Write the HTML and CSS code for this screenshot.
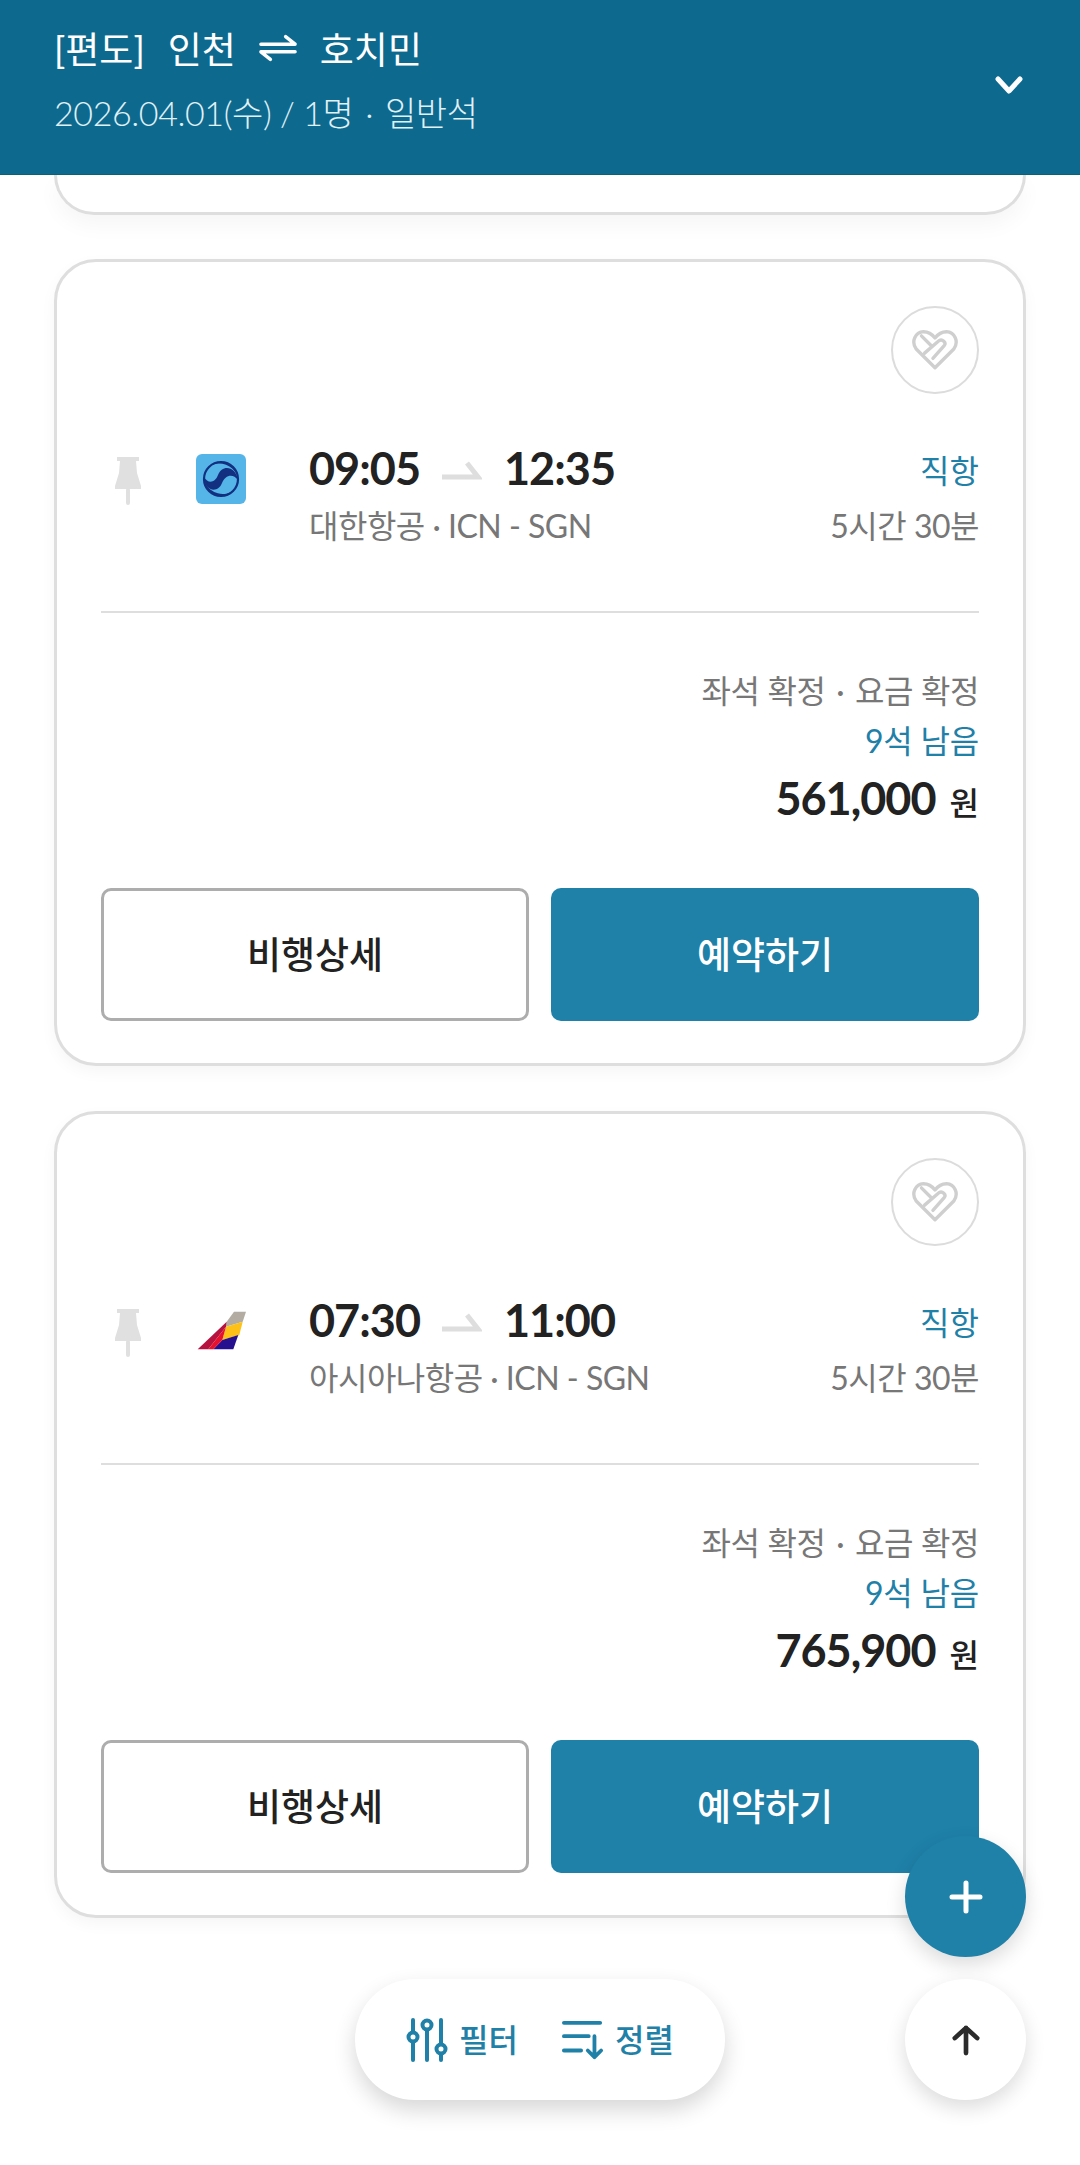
FILE: index.html
```html
<!DOCTYPE html>
<html lang="ko">

<head>
    <meta charset="UTF-8">
    <meta name="viewport" content="width=device-width, initial-scale=1.0">
    <title>항공권 검색 결과</title>
    <link rel="stylesheet" href="styles.css">
</head>

<body>
    <header class="top-bar">
        <div class="top-info">
            <div class="top-title">
                <span>[편도]</span>
                <span>인천</span>
                <svg class="swap-icon" viewBox="0 0 40 30" fill="none" stroke="#fff" stroke-width="3.6" stroke-linecap="round" stroke-linejoin="round">
                    <path d="M2 11h36L28 3"/>
                    <path d="M38 19H2l10 8"/>
                </svg>
                <span>호치민</span>
            </div>
            <div class="top-sub">2026.04.01(수) / 1명 <span class="dot">·</span> 일반석</div>
        </div>
        <svg class="chevron" viewBox="0 0 28 20" fill="none" stroke="#fff" stroke-width="5" stroke-linecap="round" stroke-linejoin="round">
            <path d="M3 4l11 12L25 4"/>
        </svg>
    </header>

    <div class="card-stub"></div>

    <article class="card">
        <div class="card-top">
            <button class="like-btn">
                <svg viewBox="-1 -1 44 40" fill="none" stroke="#cfcfcf" stroke-width="3.2" stroke-linejoin="round" stroke-linecap="round">
                    <path d="M21 36L3 18C-2 11 2 2 10 1.500c4 0 8 2 11 6 3-4 7-6 11-6 8 .5 12 9.500 7 16.500z"/>
                    <path d="M8 5.500l9 9M11 22l14-12c3-2 7 2 5 4.500L19 27"/>
                </svg>
            </button>
        </div>
        <div class="route">
            <div class="pin-slot">
                <svg class="pin" viewBox="0 0 26 48" fill="#e0e0e0">
                    <path d="M2 0h22v4h-3l1 12 4 13v3H0v-3l4-13 1-12H2z"/>
                    <rect x="11" y="31" width="4" height="17" rx="2"/>
                </svg>
            </div>
            <svg class="logo" viewBox="0 0 50 50">
                <rect width="50" height="50" rx="6" fill="#55b4e8"/>
                <circle cx="25" cy="25" r="17" fill="none" stroke="#12307f" stroke-width="2.200"/>
                <path d="M8 23c0 14 14 17 18 6 3-8 11-10 16-3C40 12 26 10 22 21c-3 8-10 9-14 2z" fill="#12307f"/>
                <path d="M9 29a17 17 0 0 0 29 7.500A20 20 0 0 1 9 29zM41 21A17 17 0 0 0 15 11 20 20 0 0 1 41 21z" fill="#12307f"/>
            </svg>
            <div class="route-main">
                <div class="times">
                    <span>09:05</span>
                    <svg class="time-arrow" viewBox="0 0 40 23" fill="none" stroke="#dedede" stroke-width="5">
                        <path d="M0 17h36L25 3"/>
                    </svg>
                    <span>12:35</span>
                </div>
                <div class="route-sub">대한항공 · ICN - SGN</div>
            </div>
            <div class="route-side">
                <div class="direct">직항</div>
                <div class="route-sub">5시간 30분</div>
            </div>
        </div>
        <div class="divider"></div>
        <div class="fare">
            <div class="fare-state">좌석 확정 <span class="dot">·</span> 요금 확정</div>
            <div class="fare-left">9석 남음</div>
            <div class="fare-price"><b>561,000</b><span>원</span></div>
        </div>
        <div class="card-btns">
            <button class="btn btn-line">비행상세</button>
            <button class="btn btn-fill">예약하기</button>
        </div>
    </article>

    <article class="card">
        <div class="card-top">
            <button class="like-btn">
                <svg viewBox="-1 -1 44 40" fill="none" stroke="#cfcfcf" stroke-width="3.2" stroke-linejoin="round" stroke-linecap="round">
                    <path d="M21 36L3 18C-2 11 2 2 10 1.500c4 0 8 2 11 6 3-4 7-6 11-6 8 .5 12 9.500 7 16.500z"/>
                    <path d="M8 5.500l9 9M11 22l14-12c3-2 7 2 5 4.500L19 27"/>
                </svg>
            </button>
        </div>
        <div class="route">
            <div class="pin-slot">
                <svg class="pin" viewBox="0 0 26 48" fill="#e0e0e0">
                    <path d="M2 0h22v4h-3l1 12 4 13v3H0v-3l4-13 1-12H2z"/>
                    <rect x="11" y="31" width="4" height="17" rx="2"/>
                </svg>
            </div>
            <svg class="logo" viewBox="0 0 50 50">
                <path d="M38 5.700h12l-3.300 10-16.700 5 .7-5z" fill="#b3aca2"/>
                <path d="M30 20.700l16.700-5L43.300 29l-17 5z" fill="#fdc117"/>
                <path d="M26.300 34l16-5-5 14.300h-20z" fill="#26108f"/>
                <path d="M30.700 15.700L1.700 43.300h10.600L30 20.700z" fill="#b5123f"/>
                <path d="M30 20.700L12.300 43.300h5L26.300 34z" fill="#e8112d"/>
            </svg>
            <div class="route-main">
                <div class="times">
                    <span>07:30</span>
                    <svg class="time-arrow" viewBox="0 0 40 23" fill="none" stroke="#dedede" stroke-width="5">
                        <path d="M0 17h36L25 3"/>
                    </svg>
                    <span>11:00</span>
                </div>
                <div class="route-sub">아시아나항공 · ICN - SGN</div>
            </div>
            <div class="route-side">
                <div class="direct">직항</div>
                <div class="route-sub">5시간 30분</div>
            </div>
        </div>
        <div class="divider"></div>
        <div class="fare">
            <div class="fare-state">좌석 확정 <span class="dot">·</span> 요금 확정</div>
            <div class="fare-left">9석 남음</div>
            <div class="fare-price"><b>765,900</b><span>원</span></div>
        </div>
        <div class="card-btns">
            <button class="btn btn-line">비행상세</button>
            <button class="btn btn-fill">예약하기</button>
        </div>
    </article>

    <div class="tool-pill">
        <div class="tool">
            <svg viewBox="0 0 40 44" fill="none" stroke="#1f80a8" stroke-width="4" stroke-linecap="round">
                <path d="M6 2v12M6 24v18M20 12v30M34 2v24M34 36v6"/>
                <circle cx="6" cy="19" r="4.500"/>
                <circle cx="20" cy="7" r="4.500"/>
                <circle cx="34" cy="31" r="4.500"/>
            </svg>
            <span>필터</span>
        </div>
        <div class="tool">
            <svg viewBox="0 0 44 42" fill="none" stroke="#1f80a8" stroke-width="4" stroke-linecap="round" stroke-linejoin="round">
                <path d="M2 3h38M2 17h26M2 32h18"/>
                <path d="M34 17v22M27 32l7 7 7-7"/>
            </svg>
            <span>정렬</span>
        </div>
    </div>

    <button class="fab fab-add">
        <svg viewBox="0 0 34 34" fill="none" stroke="#fff" stroke-width="5" stroke-linecap="round">
            <path d="M17 3v28M3 17h28"/>
        </svg>
    </button>
    <button class="fab fab-up">
        <svg viewBox="0 0 30 34" fill="none" stroke="#2b2b2b" stroke-width="5" stroke-linecap="round" stroke-linejoin="round">
            <path d="M15 31V4M3 15L15 4l12 11"/>
        </svg>
    </button>
</body>

</html>
```

FILE: styles.css
```css
* {
    padding: 0;
    margin: 0;
    box-sizing: border-box;
}

body {
    position: relative;
    height: 2165px;
    overflow: hidden;
    background-color: #fff;
    color: #222;
    font-family: Lato, "Noto Sans CJK KR", sans-serif;
}

button {
    border: 0;
    background: none;
    font-family: inherit;
}

.dot {
    margin: 0 3px;
}

/* 상단 바 */
.top-bar {
    position: relative;
    z-index: 5;
    display: flex;
    align-items: center;
    justify-content: space-between;
    height: 175px;
    padding: 0 57px 0 54px;
    background-color: #0d6a8e;
    border-bottom: 1px solid #0b5f76;
}

.top-info {
    align-self: flex-start;
    padding-top: 22px;
}

.top-title {
    display: flex;
    align-items: center;
    gap: 23px;
    height: 52px;
    font-size: 37px;
    font-weight: 400;
    color: #fff;
}

.swap-icon {
    width: 38px;
    height: 30px;
}

.top-sub {
    margin-top: 14px;
    font-size: 34px;
    font-weight: 300;
    line-height: 50px;
    color: #e0f1f8;
    letter-spacing: -0.4px;
}

.chevron {
    width: 28px;
    height: 20px;
    margin-top: -4px;
}

/* 카드 */
.card-stub {
    height: 40px;
    margin: 0 54px 44px;
    border: 3px solid #dedede;
    border-top: 0;
    border-radius: 0 0 42px 42px;
    box-shadow: 0 10px 22px rgba(0, 0, 0, .04);
}

.card {
    height: 807px;
    margin: 0 54px 45px;
    padding: 44px;
    border: 3px solid #dedede;
    border-radius: 42px;
    background-color: #fff;
    box-shadow: 0 6px 16px rgba(0, 0, 0, .04);
}

.card-top {
    display: flex;
    justify-content: flex-end;
}

.like-btn {
    display: flex;
    align-items: center;
    justify-content: center;
    width: 88px;
    height: 88px;
    border: 2px solid #dcdcdc;
    border-radius: 50%;
}

.like-btn svg {
    width: 46px;
    height: 42px;
}

.route {
    display: flex;
    margin-top: 46px;
}

.pin-slot {
    flex: none;
    width: 95px;
    padding: 17px 0 0 14px;
}

.pin {
    display: block;
    width: 26px;
    height: 48px;
}

.logo {
    flex: none;
    width: 50px;
    height: 50px;
    margin: 14px 63px 0 0;
}

.times {
    display: flex;
    align-items: center;
    height: 56px;
    font-size: 45px;
    font-weight: 700;
    letter-spacing: -1px;
    color: #222;
}

.time-arrow {
    width: 40px;
    height: 23px;
    margin: 6px 22px 0 22px;
}

.route-sub {
    margin-top: 7px;
    font-size: 32px;
    line-height: 46px;
    font-weight: 400;
    color: #777;
    letter-spacing: -0.5px;
}

.route-side {
    margin-left: auto;
    text-align: right;
}

.direct {
    height: 56px;
    font-size: 32px;
    line-height: 62px;
    color: #1f80a8;
}

.divider {
    height: 2px;
    margin-top: 62px;
    background-color: #dedede;
}

.fare {
    margin-top: 53px;
    text-align: right;
}

.fare-state {
    font-size: 32px;
    line-height: 50px;
    font-weight: 400;
    color: #777;
    letter-spacing: -0.4px;
}

.fare-left {
    font-size: 32px;
    line-height: 50px;
    color: #1f80a8;
    letter-spacing: -0.2px;
}

.fare-price {
    height: 64px;
    line-height: 64px;
}

.fare-price b {
    font-size: 45px;
    font-weight: 700;
    letter-spacing: -1px;
}

.fare-price span {
    margin-left: 14px;
    font-size: 32px;
    font-weight: 500;
}

.card-btns {
    display: grid;
    grid-template-columns: 1fr 1fr;
    gap: 22px;
    margin-top: 58px;
}

.btn {
    height: 133px;
    padding-bottom: 4px;
    border-radius: 10px;
    font-size: 37px;
    font-weight: 500;
}

.btn-line {
    border: 3px solid #adadad;
    color: #222;
    background-color: #fff;
}

.btn-fill {
    color: #fff;
    background-color: #1f80a8;
}

/* 떠있는 버튼 */
.tool-pill {
    position: absolute;
    left: 355px;
    top: 1979px;
    display: flex;
    align-items: center;
    justify-content: center;
    gap: 44px;
    width: 370px;
    height: 121px;
    border-radius: 60px;
    background-color: #fff;
    box-shadow: 0 10px 22px rgba(0, 0, 0, .16);
}

.tool {
    display: flex;
    align-items: center;
    gap: 11px;
    font-size: 32px;
    font-weight: 500;
    color: #1f80a8;
}

.tool span {
    margin-top: -4px;
}

.tool svg {
    width: 42px;
    height: 44px;
}

.fab {
    position: absolute;
    left: 905px;
    display: flex;
    align-items: center;
    justify-content: center;
    width: 121px;
    height: 121px;
    border-radius: 50%;
    box-shadow: 0 8px 20px rgba(0, 0, 0, .14);
}

.fab-add {
    top: 1836px;
    background-color: #1f80a8;
}

.fab-add svg {
    width: 34px;
    height: 34px;
}

.fab-up {
    top: 1979px;
    background-color: #fff;
}

.fab-up svg {
    width: 28px;
    height: 32px;
}
```
